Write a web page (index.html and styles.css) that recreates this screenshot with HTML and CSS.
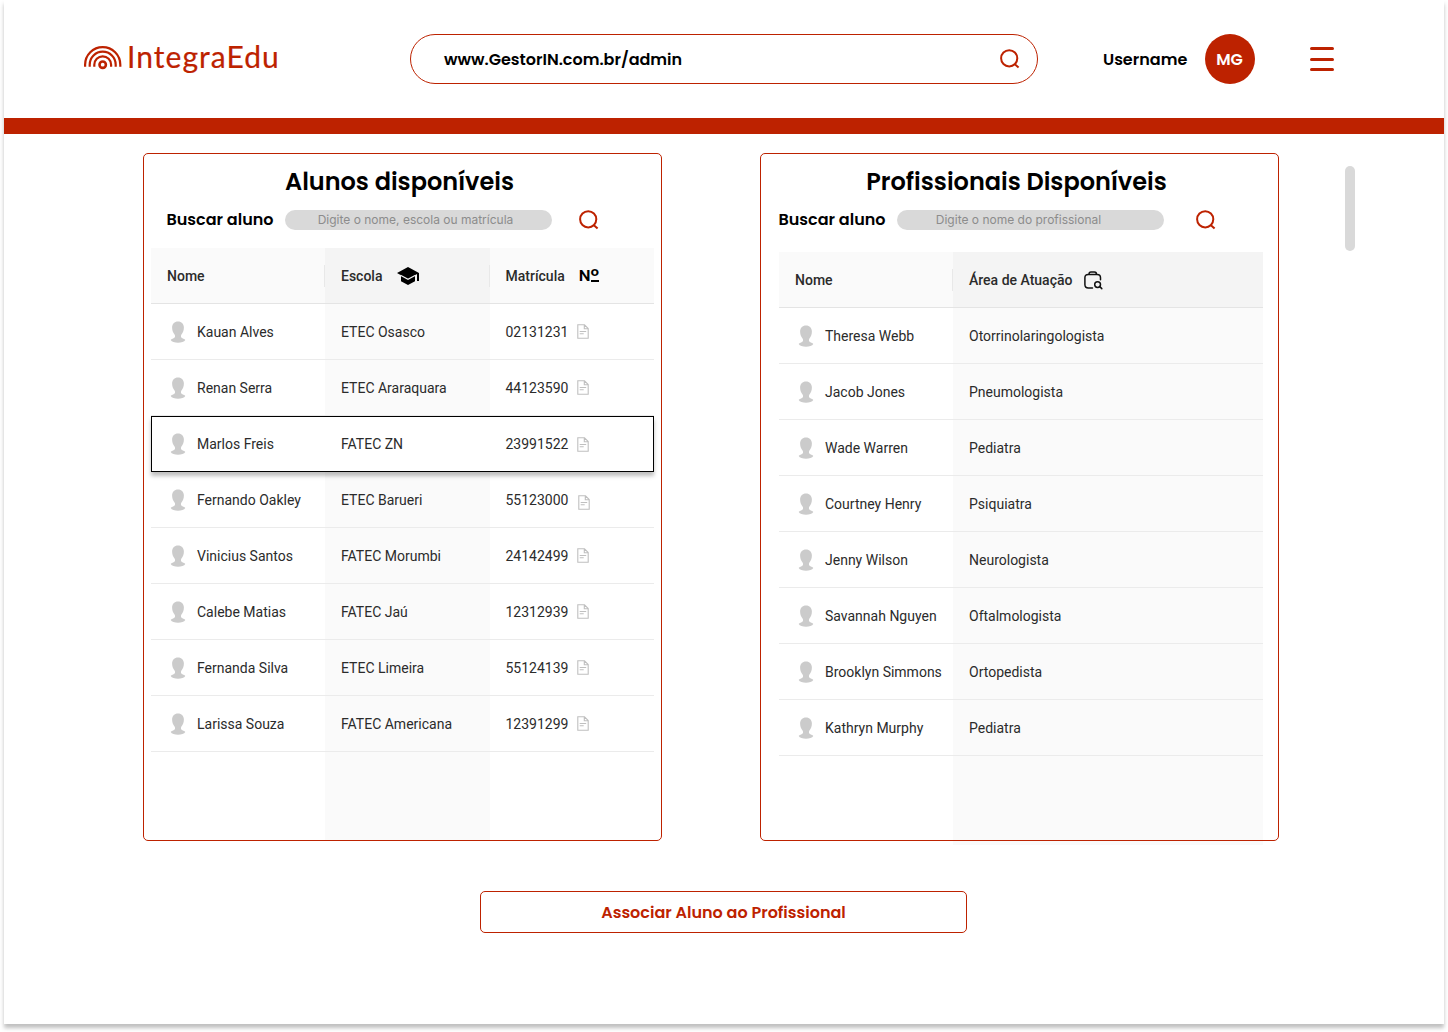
FILE: index.html
```html
<!DOCTYPE html>
<html lang="pt-BR">
<head>
<meta charset="utf-8">
<title>IntegraEdu</title>
<link rel="stylesheet" href="styles.css">
</head>
<body>
<svg class="defs" aria-hidden="true">
  <symbol id="search" viewBox="0 0 20 20"><circle cx="9.2" cy="9.3" r="8.1" fill="none" stroke="currentColor" stroke-width="2"/><path d="M14.6 15l4 3.600" fill="none" stroke="currentColor" stroke-width="2"/></symbol>
  <symbol id="person" viewBox="0 0 16 22"><path d="M8 .4c3.600 0 5.900 2.500 5.900 6.100 0 3-1.200 5.600-2.600 7.300-.4.500-.4 1.300-.3 2 .2 1.200 1.500 1.700 3 2.200.8.300 1.300.6 1.300 1-.9 1.700-4.100 2.700-7.300 2.700S1.600 20.700.7 19c0-.4.500-.7 1.300-1 1.500-.5 2.800-1 3-2.200.1-.7.100-1.500-.3-2C3.300 12.100 2.100 9.500 2.100 6.500 2.100 2.900 4.400.4 8 .4z" fill="#cbcbcb"/></symbol>
  <symbol id="doc" viewBox="0 0 12 15"><path d="M.8.8h6.700l3.700 3.700v9.700H.8zM7.300.8v3.900h3.900M2.700 7.500h6.500M2.700 9.800h4" fill="none" stroke="#c0c0c0" stroke-width="1.100"/></symbol>
</svg>
<div class="frame">
  <header class="header">
    <div class="logo">
      <svg width="38" height="24" viewBox="0 0 38 24" fill="none" stroke="#bd2200" stroke-width="2.200"><path d="M1.100 20.700v-2a17.600 17.600 0 0 1 35.200 0v2"/><path d="M5.700 20.700v-2a13 13 0 0 1 26 0v2"/><path d="M10.300 20.700v-2a8.400 8.400 0 0 1 16.800 0v2"/><circle cx="18.700" cy="18.700" r="3.200" stroke-width="2.600"/></svg>
      <span class="logo-text">IntegraEdu</span>
    </div>
    <div class="url"><span>www.GestorIN.com.br/admin</span><svg class="search"><use href="#search"/></svg></div>
    <div class="user"><span class="username">Username</span><span class="avatar">MG</span></div>
    <div class="menu"><i></i><i></i><i></i></div>
  </header>
  <div class="bar"></div>
  <main class="main">
    <section class="card students">
      <h2>Alunos disponíveis</h2>
      <div class="find"><label>Buscar aluno</label><div class="field">Digite o nome, escola ou matrícula</div><svg class="search"><use href="#search"/></svg></div>
      <div class="table">
        <div class="row head"><div>Nome</div><div>Escola<svg class="cap" viewBox="0 0 22 18"><path d="M11 0L0 6l4 2.200v6L11 18l7-3.800v-6l2-1.100V14h2V6z"/><path d="M3.500 8.300L11 12.400l7.500-4.100" fill="none" stroke="#f4f4f4" stroke-width="1.200"/></svg></div><div>Matrícula<b class="num">N<span>º</span></b></div></div>
        <div class="row"><div><svg class="person"><use href="#person"/></svg>Kauan Alves</div><div>ETEC Osasco</div><div>02131231<svg class="doc"><use href="#doc"/></svg></div></div>
        <div class="row"><div><svg class="person"><use href="#person"/></svg>Renan Serra</div><div>ETEC Araraquara</div><div>44123590<svg class="doc"><use href="#doc"/></svg></div></div>
        <div class="row selected"><div><svg class="person"><use href="#person"/></svg>Marlos Freis</div><div>FATEC ZN</div><div>23991522<svg class="doc"><use href="#doc"/></svg></div></div>
        <div class="row"><div><svg class="person"><use href="#person"/></svg>Fernando Oakley</div><div>ETEC Barueri</div><div class="shifted">55123000<svg class="doc"><use href="#doc"/></svg></div></div>
        <div class="row"><div><svg class="person"><use href="#person"/></svg>Vinicius Santos</div><div>FATEC Morumbi</div><div>24142499<svg class="doc"><use href="#doc"/></svg></div></div>
        <div class="row"><div><svg class="person"><use href="#person"/></svg>Calebe Matias</div><div>FATEC Jaú</div><div>12312939<svg class="doc"><use href="#doc"/></svg></div></div>
        <div class="row"><div><svg class="person"><use href="#person"/></svg>Fernanda Silva</div><div>ETEC Limeira</div><div>55124139<svg class="doc"><use href="#doc"/></svg></div></div>
        <div class="row"><div><svg class="person"><use href="#person"/></svg>Larissa Souza</div><div>FATEC Americana</div><div>12391299<svg class="doc"><use href="#doc"/></svg></div></div>
        <div class="row filler"><div></div><div></div><div></div></div>
      </div>
    </section>
    <section class="card pros">
      <h2>Profissionais Disponíveis</h2>
      <div class="find"><label>Buscar aluno</label><div class="field">Digite o nome do profissional</div><svg class="search"><use href="#search"/></svg></div>
      <div class="table">
        <div class="row head"><div>Nome</div><div>Área de Atuação<svg class="bag" viewBox="0 0 19 19" fill="none" stroke="#111" stroke-width="1.500"><path d="M8.500 17H4.300C2 17 .9 15.900.9 13.600V6.700c0-2.100 1.100-3.200 3.300-3.200h9c2.200 0 3.300 1.100 3.300 3.200v2M5 3.300C5 1.700 5.700.9 7 .9h3.500c1.300 0 2 .8 2 2.400M15.800 15.600l2 2" stroke-linecap="round"/><circle cx="13.600" cy="13.600" r="2.900"/></svg></div></div>
        <div class="row"><div><svg class="person"><use href="#person"/></svg>Theresa Webb</div><div>Otorrinolaringologista</div></div>
        <div class="row"><div><svg class="person"><use href="#person"/></svg>Jacob Jones</div><div>Pneumologista</div></div>
        <div class="row"><div><svg class="person"><use href="#person"/></svg>Wade Warren</div><div>Pediatra</div></div>
        <div class="row"><div><svg class="person"><use href="#person"/></svg>Courtney Henry</div><div>Psiquiatra</div></div>
        <div class="row"><div><svg class="person"><use href="#person"/></svg>Jenny Wilson</div><div>Neurologista</div></div>
        <div class="row"><div><svg class="person"><use href="#person"/></svg>Savannah Nguyen</div><div>Oftalmologista</div></div>
        <div class="row"><div><svg class="person"><use href="#person"/></svg>Brooklyn Simmons</div><div>Ortopedista</div></div>
        <div class="row"><div><svg class="person"><use href="#person"/></svg>Kathryn Murphy</div><div>Pediatra</div></div>
        <div class="row filler"><div></div><div></div></div>
      </div>
    </section>
    <div class="scroll"></div>
  </main>
  <button class="assoc">Associar Aluno ao Profissional</button>
</div>
</body>
</html>
```
FILE: styles.css
```css
* { box-sizing: border-box; }
body { margin: 0; height: 1032px; background: #fff; font-family: Roboto, sans-serif; }
.defs { display: none; }
.frame { width: 1440px; height: 1024px; margin: 0 4px; background: #fff; box-shadow: 0 4px 4px rgba(0,0,0,.25); display: flex; flex-direction: column; isolation: isolate; }
.header { height: 118px; flex: none; display: flex; align-items: center; padding-left: 80px; font-family: Poppins, Inter, sans-serif; font-weight: 600; font-size: 16px; }
.logo { width: 326px; display: flex; align-items: center; color: #bd2200; margin-bottom: 2px; }
.logo svg { flex: none; }
.logo-text { font: 400 30px/40px Lato, sans-serif; margin: 0 0 5px 5px; letter-spacing: 1.050px; -webkit-text-stroke: .2px #bd2200; }
.url { width: 628px; height: 50px; border: 1px solid #bd2200; border-radius: 25px; display: flex; align-items: center; justify-content: space-between; padding: 0 17px 0 33px; }
.search { width: 20px; height: 20px; color: #bd2200; flex: none; }
.user { display: flex; align-items: center; margin-left: 65px; }
.username { width: 102px; }
.avatar { width: 50px; height: 50px; border-radius: 50%; background: #bd2200; color: #fff; display: flex; align-items: center; justify-content: center; padding-right: 1px; }
.menu { width: 24px; height: 24px; margin-left: 55px; display: flex; flex-direction: column; justify-content: space-between; }
.menu i { height: 3px; border-radius: 1.5px; background: #bd2200; }
.bar { height: 16px; flex: none; background: #bd2200; }
.main { display: flex; padding: 19px 0 0 139px; }
.card { width: 519px; height: 688px; flex: none; border: 1px solid #bd2200; border-radius: 5px; display: flex; flex-direction: column; }
.pros { margin-left: 98px; }
.card h2 { margin: 10px 0 0; padding-right: 6px; height: 36px; font: 600 24px/36px Poppins, Inter, sans-serif; text-align: center; }
.find { display: flex; align-items: center; height: 20px; margin-top: 10px; padding-left: 22.500px; font: 600 16px/20px Poppins, Inter, sans-serif; }
.find label { width: 118.500px; white-space: nowrap; }
.field { width: 267px; height: 20px; border-radius: 10px; background: #d9d9d9; color: #8c8c8c; font: 400 12px/20px Inter, sans-serif; text-align: center; padding-right: 6px; }
.pros .field { padding-right: 24px; }
.find .search { margin-left: 27px; }
.table { display: flex; flex-direction: column; flex: 1; margin: 18px 7px 0; }
.row { display: grid; grid-template-columns: 174px 165px 1fr; height: 56px; flex: none; font-size: 14px; letter-spacing: 0; color: #2b2b2b; }
.row > div { display: flex; align-items: center; padding-left: 16px; border-bottom: 1px solid #ebebeb; }
.row > div:nth-child(2) { background: #fafafa; }
.row > div:nth-child(3) { padding-left: 15.500px; }
.head { font-weight: 500; }
.head > div { background: #fafafa; border-color: #e4e4e4; position: relative; }
.row.head > div:nth-child(2) { background: #f4f4f4; }
.head > div:not(:last-child)::after { content: ""; position: absolute; right: 0; top: 17px; width: 1px; height: 22px; background: #e8e8e8; }
.person { width: 16px; height: 22px; margin: 0 11px 0 3px; flex: none; }
.doc { width: 12px; height: 15px; margin-left: 9px; }
.cap { width: 22px; height: 18px; margin-left: 15px; }
.bag { width: 19px; height: 19px; margin: 2px 0 0 12px; }
.num { display: flex; align-items: center; font: 600 16px/24px Poppins, Inter, sans-serif; color: #000; margin-left: 14px; }
.num span { height: 13px; font-size: 19px; line-height: 16px; border-bottom: 2px solid #000; }
.shifted .doc { margin: 6px 0 0 10px; }
.row.selected { position: relative; border: 1px solid #000; background: #fff; box-shadow: 0 4px 4px rgba(0,0,0,.25); grid-template-columns: 173px 165px 1fr; }
.row.selected > div { background: #fff; border: 0; }
.row.selected > div:first-child { padding-left: 15px; }
.filler { height: auto; flex: 1; }
.row.filler > div { border: 0; }
.pros .find { padding-left: 17.500px; }
.pros .table { margin: 22px 15px -5px 18px; position: relative; z-index: -1; }
.pros .row { grid-template-columns: 174px 1fr; }
.pros .find .search { margin-left: 32px; }
.scroll { width: 10px; height: 85px; margin: 13px 0 0 66px; border-radius: 5px; background: #d9d9d9; }
.assoc { width: 487px; height: 42px; margin: 50px 0 0 476px; border: 1px solid #bd2200; border-radius: 5px; background: #fff; color: #bd2200; font: 600 16px Poppins, Inter, sans-serif; }
```
